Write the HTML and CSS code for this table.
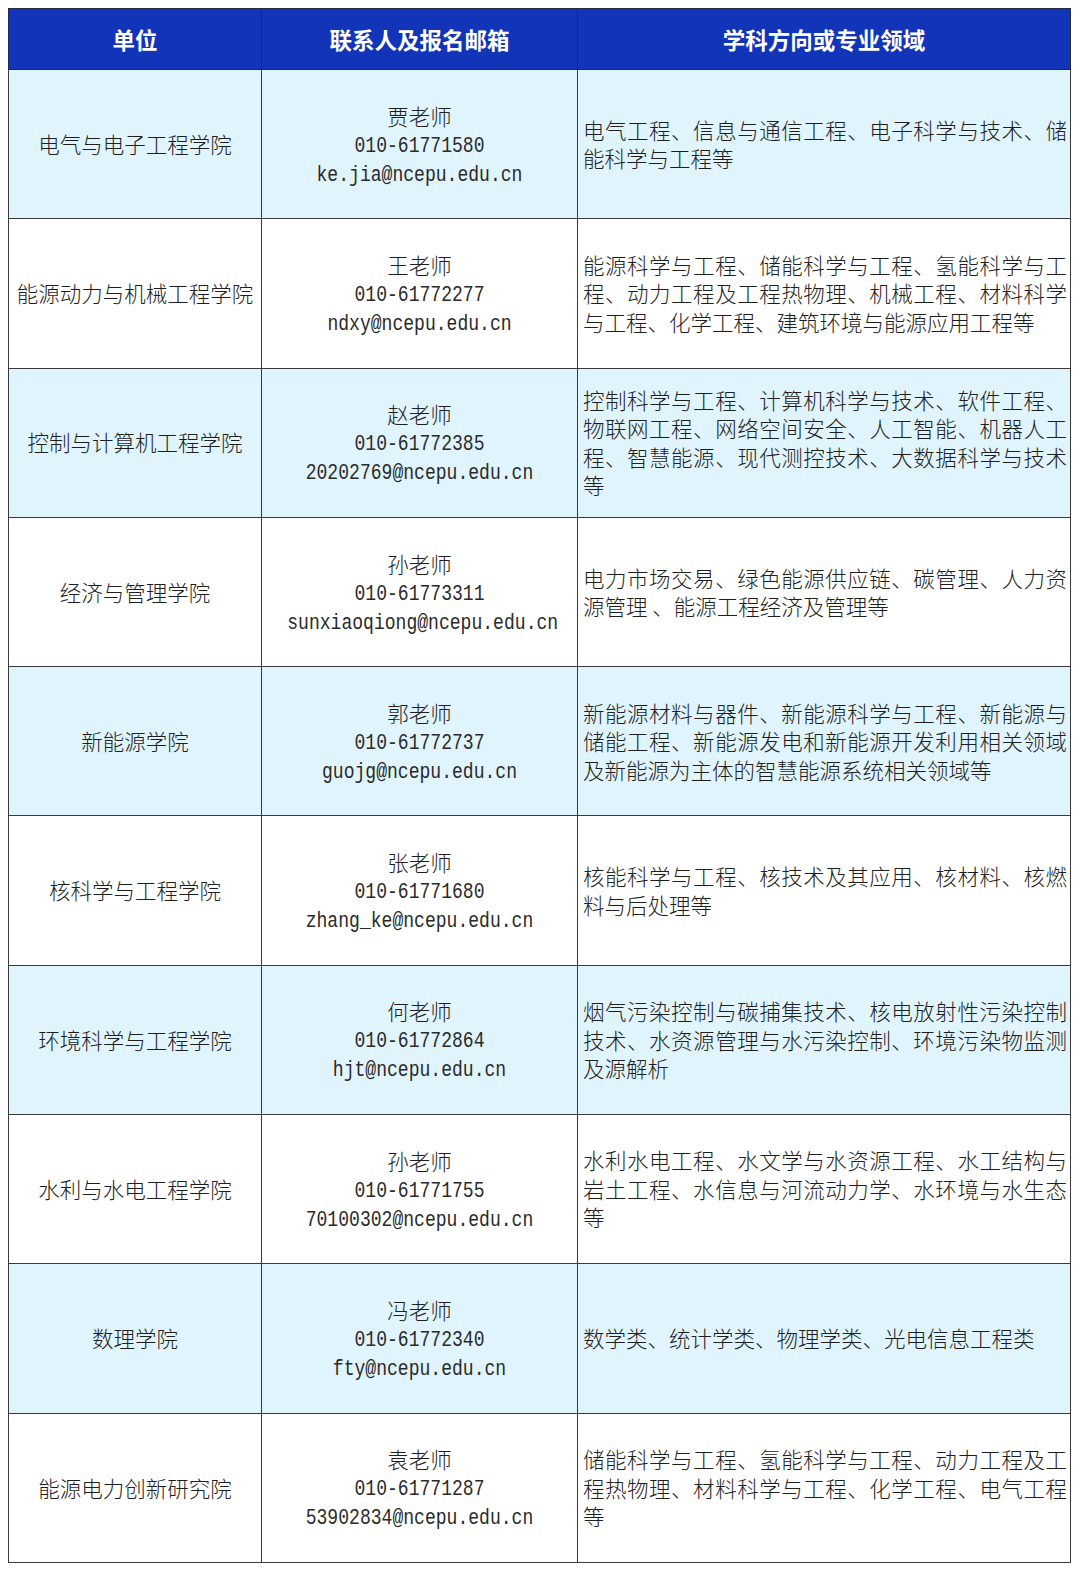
FILE: index.html
```html
<!DOCTYPE html>
<html lang="zh-CN">
<head>
<meta charset="utf-8">
<link rel="stylesheet" href="styles.css">
</head>
<body>
<table class="tbl">
<colgroup><col class="c1"><col class="c2"><col class="c3"></colgroup>
<thead>
<tr><th>单位</th><th>联系人及报名邮箱</th><th>学科方向或专业领域</th></tr>
</thead>
<tbody>
<tr class="alt"><td class="unit">电气与电子工程学院</td><td class="contact"><div>贾老师</div><div class="lat">010-61771580</div><div class="lat">ke.jia@ncepu.edu.cn</div></td><td class="field">电气工程、信息与通信工程、电子科学与技术、储能科学与工程等</td></tr>
<tr><td class="unit">能源动力与机械工程学院</td><td class="contact"><div>王老师</div><div class="lat">010-61772277</div><div class="lat">ndxy@ncepu.edu.cn</div></td><td class="field">能源科学与工程、储能科学与工程、氢能科学与工程、动力工程及工程热物理、机械工程、材料科学与工程、化学工程、建筑环境与能源应用工程等</td></tr>
<tr class="alt"><td class="unit">控制与计算机工程学院</td><td class="contact"><div>赵老师</div><div class="lat">010-61772385</div><div class="lat">20202769@ncepu.edu.cn</div></td><td class="field">控制科学与工程、计算机科学与技术、软件工程、物联网工程、网络空间安全、人工智能、机器人工程、智慧能源、现代测控技术、大数据科学与技术等</td></tr>
<tr><td class="unit">经济与管理学院</td><td class="contact"><div>孙老师</div><div class="lat">010-61773311</div><div class="lat">sunxiaoqiong@ncepu.edu.cn</div></td><td class="field">电力市场交易、绿色能源供应链、碳管理、人力资源管理 、能源工程经济及管理等</td></tr>
<tr class="alt"><td class="unit">新能源学院</td><td class="contact"><div>郭老师</div><div class="lat">010-61772737</div><div class="lat">guojg@ncepu.edu.cn</div></td><td class="field">新能源材料与器件、新能源科学与工程、新能源与储能工程、新能源发电和新能源开发利用相关领域及新能源为主体的智慧能源系统相关领域等</td></tr>
<tr><td class="unit">核科学与工程学院</td><td class="contact"><div>张老师</div><div class="lat">010-61771680</div><div class="lat">zhang_ke@ncepu.edu.cn</div></td><td class="field">核能科学与工程、核技术及其应用、核材料、核燃料与后处理等</td></tr>
<tr class="alt"><td class="unit">环境科学与工程学院</td><td class="contact"><div>何老师</div><div class="lat">010-61772864</div><div class="lat">hjt@ncepu.edu.cn</div></td><td class="field">烟气污染控制与碳捕集技术、核电放射性污染控制技术、水资源管理与水污染控制、环境污染物监测及源解析</td></tr>
<tr><td class="unit">水利与水电工程学院</td><td class="contact"><div>孙老师</div><div class="lat">010-61771755</div><div class="lat">70100302@ncepu.edu.cn</div></td><td class="field">水利水电工程、水文学与水资源工程、水工结构与岩土工程、水信息与河流动力学、水环境与水生态等</td></tr>
<tr class="alt"><td class="unit">数理学院</td><td class="contact"><div>冯老师</div><div class="lat">010-61772340</div><div class="lat">fty@ncepu.edu.cn</div></td><td class="field">数学类、统计学类、物理学类、光电信息工程类</td></tr>
<tr><td class="unit">能源电力创新研究院</td><td class="contact"><div>袁老师</div><div class="lat">010-61771287</div><div class="lat">53902834@ncepu.edu.cn</div></td><td class="field">储能科学与工程、氢能科学与工程、动力工程及工程热物理、材料科学与工程、化学工程、电气工程等</td></tr>
</tbody>
</table>
</body>
</html>
```
FILE: styles.css
```css
html, body {
  margin: 0;
  padding: 0;
  background: #ffffff;
}
body {
  padding: 8px;
  font-family: "Noto Sans CJK SC", "Noto Sans", sans-serif;
  color: #1e1e1e;
}
.tbl {
  border-collapse: collapse;
  table-layout: fixed;
  width: 1062px;
  border: 1px solid #2a2a2a;
}
.c1 { width: 253px; }
.c2 { width: 316px; }
.c3 { width: 493px; }
.tbl th {
  background: #1234b8;
  color: #ffffff;
  font-weight: 700;
  font-size: 22.5px;
  height: 60px;
  padding: 0;
  border: 1px solid #222a44;
  text-align: center;
  vertical-align: middle;
  line-height: 1;
}
.tbl td {
  height: 149.3px;
  padding: 0;
  border: 1px solid #3a3a3a;
  vertical-align: middle;
  font-size: 21.5px;
  font-weight: 300;
  line-height: 28.5px;
  box-sizing: border-box;
}
.tbl tr.alt td {
  background: #e0f4fd;
}
.unit {
  text-align: center;
}
.tbl td.contact {
  text-align: center;
  line-height: 29px;
}
.lat {
  display: block;
  font-family: "Liberation Mono", monospace;
  font-size: 21.5px;
  font-weight: 400;
  line-height: 29px;
  height: 29px;
  color: #2a2a2a;
  transform: translateY(2px) scaleX(0.84);
  transform-origin: center;
}
.tbl td.field {
  text-align: justify;
  padding: 0 3px 0 5px;
  word-break: break-all;
}
```
